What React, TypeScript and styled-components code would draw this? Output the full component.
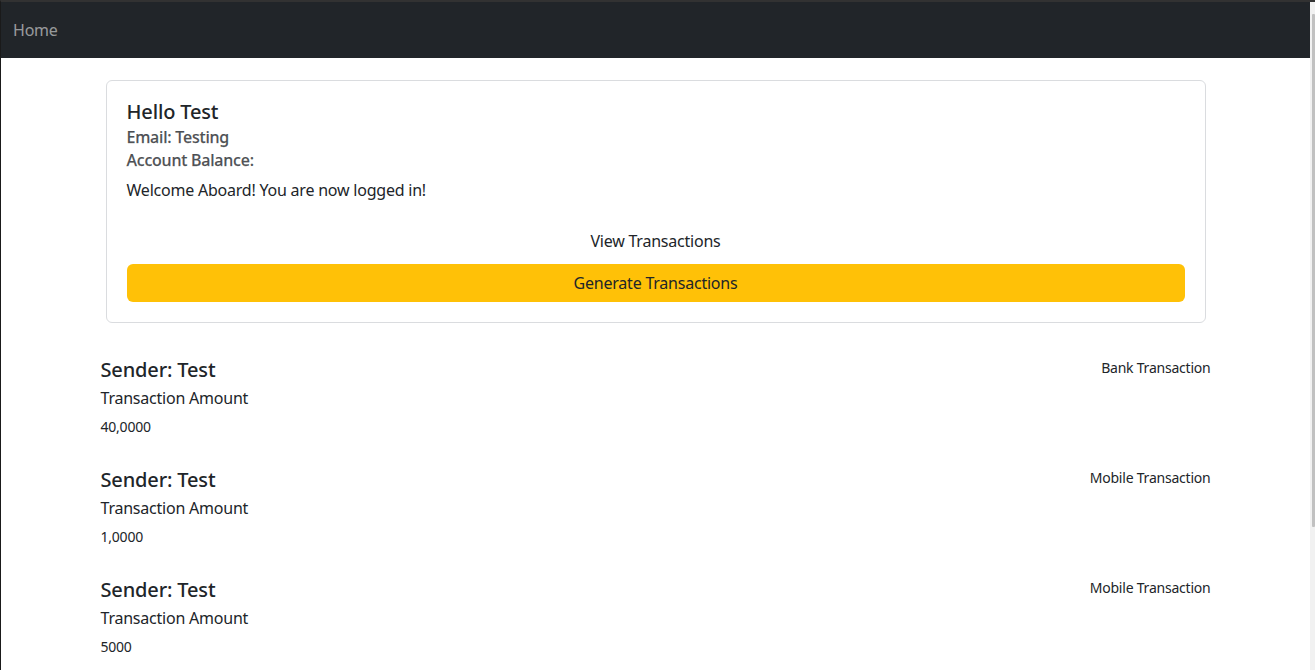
import React from "react";
import styled, { createGlobalStyle } from "styled-components";

const GlobalStyle = createGlobalStyle`
  html, body {
    margin: 0;
    padding: 0;
    overflow: hidden;
    background: #ffffff;
  }
  body {
    font-family: "Noto Sans", "Open Sans", sans-serif;
    color: #212529;
    letter-spacing: -0.22px;
  }
  * { box-sizing: border-box; }
`;

const Frame = styled.div`
  width: 1315px;
  height: 670px;
  display: flex;
  border-top: 2px solid #323232;
  border-left: 1px solid #1a1a1a;
  overflow: hidden;
`;

const Main = styled.div`
  flex: 1;
  min-width: 0;
  display: flex;
  flex-direction: column;
  overflow: hidden;
`;

const ScrollTrack = styled.div`
  width: 5px;
  flex: none;
  background: #f1f1f1;
  padding: 12px 0 0 2px;
`;

const ScrollThumb = styled.div`
  width: 3px;
  height: 513px;
  background: #c1c1c1;
  border-radius: 1px;
`;

const Navbar = styled.nav`
  height: 56px;
  flex: none;
  background: #212529;
  display: flex;
  align-items: center;
  padding: 0 12px;
`;

const NavLink = styled.a`
  font-size: 16px;
  line-height: 24px;
  color: rgba(255, 255, 255, 0.55);
  text-decoration: none;
`;

const Container = styled.div`
  width: 1110px;
  margin: 0 auto;
  display: flex;
  flex-direction: column;
`;

const Card = styled.div`
  margin: 22px 5px 0;
  border: 1px solid #dadcdf;
  border-radius: 6px;
  padding: 20px;
  display: flex;
  flex-direction: column;
`;

const CardTitle = styled.h5`
  margin: -2px 0 2px;
  font-size: 20px;
  line-height: 25px;
  font-weight: 500;
  letter-spacing: -0.15px;
`;

const CardSubtitle = styled.h6`
  margin: 0;
  font-size: 16px;
  line-height: 23px;
  font-weight: 500;
  color: rgba(33, 37, 41, 0.78);
  -webkit-text-stroke: 0.25px rgba(33, 37, 41, 0.6);
`;

const CardText = styled.p`
  margin: 6px 0 20px;
  font-size: 16px;
  line-height: 24px;
`;

const Button = styled.button<{ $variant?: "link" | "warning" }>`
  height: 38px;
  width: 100%;
  border: none;
  border-radius: 6px;
  font-family: inherit;
  letter-spacing: inherit;
  font-size: 16px;
  line-height: 24px;
  color: #212529;
  background: ${(p) => (p.$variant === "warning" ? "#ffc107" : "transparent")};
  margin-top: ${(p) => (p.$variant === "warning" ? "4px" : "0")};
  cursor: pointer;
`;

const List = styled.div`
  margin-top: 35px;
  display: flex;
  flex-direction: column;
`;

const Item = styled.div`
  display: flex;
  flex-direction: column;
  margin-bottom: 31px;
`;

const ItemHeader = styled.div`
  display: flex;
  justify-content: space-between;
  align-items: flex-start;
`;

const Sender = styled.h5`
  margin: 0;
  font-size: 20px;
  line-height: 24px;
  font-weight: 500;
  letter-spacing: -0.15px;
`;

const Kind = styled.small`
  font-size: 14px;
  line-height: 20px;
`;

const AmountLabel = styled.div`
  margin-top: 4px;
  font-size: 16px;
  line-height: 24px;
`;

const AmountValue = styled.small`
  margin-top: 6px;
  font-size: 14px;
  line-height: 21px;
`;

const transactions = [
  { sender: "Test", kind: "Bank Transaction", amount: "40,0000" },
  { sender: "Test", kind: "Mobile Transaction", amount: "1,0000" },
  { sender: "Test", kind: "Mobile Transaction", amount: "5000" },
];

export default function App() {
  return (
    <>
      <GlobalStyle />
      <Frame>
        <Main>
          <Navbar>
            <NavLink href="#">Home</NavLink>
          </Navbar>
          <Container>
            <Card>
              <CardTitle>Hello Test</CardTitle>
              <CardSubtitle>Email: Testing</CardSubtitle>
              <CardSubtitle>Account Balance:</CardSubtitle>
              <CardText>Welcome Aboard! You are now logged in!</CardText>
              <Button $variant="link">View Transactions</Button>
              <Button $variant="warning">Generate Transactions</Button>
            </Card>
            <List>
              {transactions.map((t, i) => (
                <Item key={i}>
                  <ItemHeader>
                    <Sender>Sender: {t.sender}</Sender>
                    <Kind>{t.kind}</Kind>
                  </ItemHeader>
                  <AmountLabel>Transaction Amount</AmountLabel>
                  <AmountValue>{t.amount}</AmountValue>
                </Item>
              ))}
            </List>
          </Container>
        </Main>
        <ScrollTrack>
          <ScrollThumb />
        </ScrollTrack>
      </Frame>
    </>
  );
}
